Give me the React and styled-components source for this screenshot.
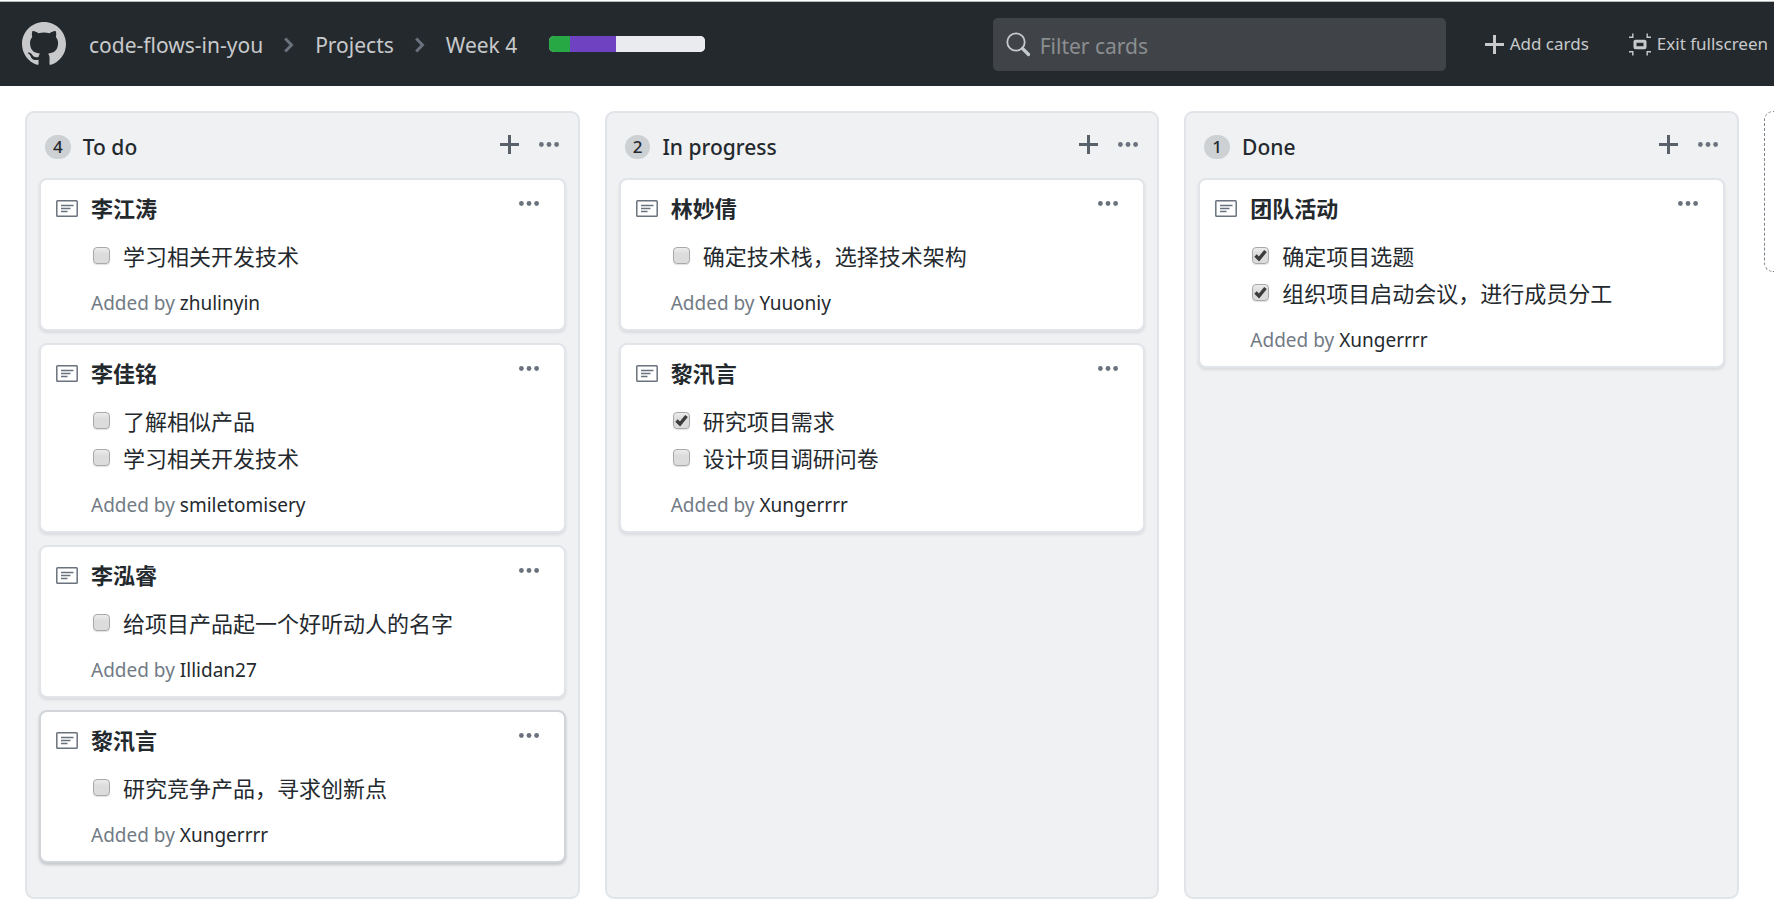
import React from "react";
import styled, { createGlobalStyle } from "styled-components";

const GlobalStyle = createGlobalStyle`
  *, *::before, *::after { box-sizing: border-box; }
  body {
    margin: 0;
    background: #ffffff;
    color: #24292e;
    font-family: "Noto Sans", "Noto Sans CJK SC", sans-serif;
    font-size: 21px;
  }
  button, input { font: inherit; }
`;

const Page = styled.div`
  display: flex;
  flex-direction: column;
  min-height: 100vh;
  overflow-x: hidden;
`;

const Header = styled.header`
  display: flex;
  align-items: center;
  height: 86px;
  padding: 2px 6px 0 22px;
  background: linear-gradient(#ffffff 1px, #b4bcbe 1px, #b4bcbe 2px, #24292e 2px);
  color: #c8c9cb;
`;

const LogoLink = styled.a`
  display: flex;
  margin-right: 23px;
  color: inherit;
`;

const Crumbs = styled.nav`
  display: flex;
  align-items: center;
  gap: 21px;
  padding-top: 2px;
`;

const Crumb = styled.a`
  color: inherit;
  text-decoration: none;
  white-space: nowrap;
  line-height: 32px;
`;

const Progress = styled.div`
  display: flex;
  width: 156px;
  height: 16px;
  margin-left: 32px;
  border-radius: 5px;
  overflow: hidden;
  background: #eaebef;
`;

const Segment = styled.span`
  flex: ${(p) => p.$share} 0 0;
  background: ${(p) => p.$color};
`;

const Filter = styled.label`
  display: flex;
  align-items: center;
  gap: 9px;
  width: 453px;
  height: 53px;
  margin-left: auto;
  padding: 0 12px 0 13px;
  border-radius: 5px;
  background: #404448;
`;

const FilterInput = styled.input`
  flex: 1;
  min-width: 0;
  padding: 4px 0 0;
  border: 0;
  outline: 0;
  background: transparent;
  color: #ffffff;
  &::placeholder { color: #8b8e90; opacity: 1; }
`;

const Actions = styled.div`
  display: flex;
  gap: 40px;
  margin-left: 39px;
`;

const HeaderButton = styled.button`
  display: flex;
  align-items: center;
  gap: 6px;
  padding: 0;
  border: 0;
  background: none;
  color: inherit;
  font-size: 17px;
  line-height: 32px;
  white-space: nowrap;
  cursor: pointer;
`;

const Board = styled.main`
  flex: 1;
  display: grid;
  grid-template-columns: repeat(3, minmax(0, 1fr)) 10px;
  gap: 25px;
  padding: 25px 0 16px 25px;
`;

const ColumnBox = styled.section`
  display: flex;
  flex-direction: column;
  padding: 0 12px 34px;
  border: 2px solid #e1e4e8;
  border-radius: 9px;
  background: #eff1f3;
`;

const ColumnHeader = styled.div`
  display: flex;
  align-items: center;
  height: 65px;
  padding: 3px 7px 0 6px;
`;

const Count = styled.span`
  min-width: 24px;
  height: 24px;
  padding: 0 8px;
  border-radius: 12px;
  background: #ced1d4;
  font-size: 17px;
  font-weight: 500;
  line-height: 24px;
  text-align: center;
`;

const ColumnTitle = styled.h2`
  flex: 1;
  margin: 0 0 0 12px;
  font-size: 21px;
  font-weight: 500;
  line-height: 32px;
`;

const IconButton = styled.button`
  display: flex;
  padding: 0;
  border: 0;
  background: none;
  color: ${(p) => p.$color || "#6a737d"};
  cursor: pointer;
`;

const ColumnActions = styled.div`
  display: flex;
  align-items: center;
  gap: 20px;
  padding-bottom: 6px;
`;

const Cards = styled.div`
  display: flex;
  flex-direction: column;
  gap: 12px;
`;

const CardBox = styled.article`
  display: flex;
  align-items: flex-start;
  padding: 10px 25px 10px 15px;
  border: 2px solid ${(p) => (p.$active ? "#d1d5da" : "#e1e4e8")};
  border-radius: 8px;
  background: #ffffff;
  box-shadow: 0 2px 3px rgba(27, 31, 35, ${(p) => (p.$active ? 0.2 : 0.1)});
  > svg { margin-top: 10px; color: #6a737d; }
  > button { margin-top: 11px; }
`;

const CardBody = styled.div`
  flex: 1;
  min-width: 0;
  margin-left: 13px;
`;

const CardTitle = styled.h3`
  margin: 0 0 11px;
  font-size: 22px;
  font-weight: 700;
  line-height: 37px;
`;

const Tasks = styled.ul`
  margin: 0;
  padding: 0 0 0 2px;
  list-style: none;
`;

const Task = styled.label`
  display: flex;
  align-items: center;
  gap: 13px;
  font-size: 22px;
  line-height: 37px;
`;

const TickFrame = styled.span`
  position: relative;
  display: flex;
  padding-bottom: 3px;
  svg { position: absolute; top: 0; left: 0; pointer-events: none; }
  input:not(:checked) + svg { display: none; }
`;

const TickBox = styled.input`
  appearance: none;
  width: 17px;
  height: 17px;
  margin: 0;
  border: 1px solid #a9a9a9;
  border-radius: 4px;
  background: linear-gradient(#ececec, #dcdcdc 40%, #dcdcdc);
  box-shadow: 0 1px 1px rgba(0, 0, 0, 0.12);
`;

const AddedBy = styled.p`
  margin: 12px 0 0;
  color: #727b85;
  font-size: 19px;
  line-height: 32px;
`;

const Author = styled.a`
  color: #24292e;
  text-decoration: none;
`;

const AddColumn = styled.button`
  height: 161px;
  padding: 0;
  border: 1px dashed #7d858d;
  border-right: 0;
  border-radius: 9px 0 0 9px;
  background: none;
`;

const GitHubMark = () => (
  <svg width="44" height="44" viewBox="0 0 16 16" fill="currentColor" aria-hidden="true">
    <path d="M8 0C3.58 0 0 3.58 0 8c0 3.54 2.29 6.53 5.47 7.59.4.07.55-.17.55-.38 0-.19-.01-.82-.01-1.49-2.01.37-2.53-.49-2.69-.94-.09-.23-.48-.94-.82-1.13-.28-.15-.68-.52-.01-.53.63-.01 1.08.58 1.23.82.72 1.21 1.87.87 2.33.66.07-.52.28-.87.51-1.07-1.78-.2-3.64-.89-3.64-3.95 0-.87.31-1.59.82-2.15-.08-.2-.36-1.02.08-2.12 0 0 .67-.21 2.2.82.64-.18 1.32-.27 2-.27.68 0 1.36.09 2 .27 1.53-1.04 2.2-.82 2.2-.82.44 1.1.16 1.92.08 2.12.51.56.82 1.27.82 2.15 0 3.07-1.87 3.75-3.65 3.95.29.25.54.73.54 1.48 0 1.07-.01 1.93-.01 2.2 0 .21.15.46.55.38A8.013 8.013 0 0016 8c0-4.42-3.58-8-8-8z" />
  </svg>
);

const Chevron = () => (
  <svg width="10" height="16" viewBox="0 0 10 16" fill="none" stroke="#6a737d" strokeWidth="3" aria-hidden="true">
    <path d="M1.2 1.5 7.5 8l-6.3 6.5" />
  </svg>
);

const SearchIcon = () => (
  <svg width="25" height="25" viewBox="0 0 25 25" fill="none" stroke="#c6cacd" aria-hidden="true">
    <circle cx="10" cy="10" r="8.7" strokeWidth="1.8" />
    <path d="m16.5 16.5 6 6" strokeWidth="3.2" strokeLinecap="round" />
  </svg>
);

const PlusIcon = () => (
  <svg width="19" height="19" viewBox="0 0 19 19" fill="currentColor" aria-hidden="true">
    <path d="M8 0h3v8h8v3h-8v8H8v-8H0V8h8z" />
  </svg>
);

const DotsIcon = () => (
  <svg width="20" height="5" viewBox="0 0 20 5" fill="currentColor" aria-hidden="true">
    <circle cx="2.4" cy="2.5" r="2.4" />
    <circle cx="10" cy="2.5" r="2.4" />
    <circle cx="17.6" cy="2.5" r="2.4" />
  </svg>
);

const ExitIcon = () => (
  <svg width="22" height="23" viewBox="0 0 22 23" fill="none" stroke="currentColor" aria-hidden="true">
    <path d="M0 4.3h3.8V.5M22 4.3h-3.8V.5M0 18.7h3.8v3.8M22 18.7h-3.8v3.8" strokeWidth="1.4" />
    <rect x="6" y="8.3" width="10" height="6.4" rx="0.5" strokeWidth="3" />
  </svg>
);

const NoteIcon = () => (
  <svg width="22" height="17" viewBox="0 0 22 17" fill="none" stroke="currentColor" strokeWidth="1.5" aria-hidden="true">
    <rect x="0.8" y="0.8" width="20.4" height="15.4" rx="0.8" />
    <path d="M5 5.5h12.5M5 8.5h9.5M5 11.5h6.5" />
  </svg>
);

const TickIcon = () => (
  <svg width="17" height="17" viewBox="0 0 17 17" fill="none" stroke="#3c3c3c" strokeWidth="3.4" aria-hidden="true">
    <path d="M3.5 8.5 7 12l6.5-8" />
  </svg>
);

const columns = [
  {
    title: "To do",
    cards: [
      { title: "李江涛", author: "zhulinyin", tasks: [["学习相关开发技术", false]] },
      { title: "李佳铭", author: "smiletomisery", tasks: [["了解相似产品", false], ["学习相关开发技术", false]] },
      { title: "李泓睿", author: "Illidan27", tasks: [["给项目产品起一个好听动人的名字", false]] },
      { title: "黎汛言", author: "Xungerrrr", active: true, tasks: [["研究竞争产品，寻求创新点", false]] },
    ],
  },
  {
    title: "In progress",
    cards: [
      { title: "林妙倩", author: "Yuuoniy", tasks: [["确定技术栈，选择技术架构", false]] },
      { title: "黎汛言", author: "Xungerrrr", tasks: [["研究项目需求", true], ["设计项目调研问卷", false]] },
    ],
  },
  {
    title: "Done",
    cards: [
      { title: "团队活动", author: "Xungerrrr", tasks: [["确定项目选题", true], ["组织项目启动会议，进行成员分工", true]] },
    ],
  },
];

function Card({ card }) {
  return (
    <CardBox $active={card.active}>
      <NoteIcon />
      <CardBody>
        <CardTitle>{card.title}</CardTitle>
        <Tasks>
          {card.tasks.map(([text, done]) => (
            <li key={text}>
              <Task>
                <TickFrame>
                  <TickBox type="checkbox" defaultChecked={done} />
                  <TickIcon />
                </TickFrame>
                {text}
              </Task>
            </li>
          ))}
        </Tasks>
        <AddedBy>
          Added by <Author href="#">{card.author}</Author>
        </AddedBy>
      </CardBody>
      <IconButton aria-label="Card menu"><DotsIcon /></IconButton>
    </CardBox>
  );
}

function Column({ column }) {
  return (
    <ColumnBox>
      <ColumnHeader>
        <Count>{column.cards.length}</Count>
        <ColumnTitle>{column.title}</ColumnTitle>
        <ColumnActions>
          <IconButton aria-label="Add a note" $color="#586069"><PlusIcon /></IconButton>
          <IconButton aria-label="Column menu"><DotsIcon /></IconButton>
        </ColumnActions>
      </ColumnHeader>
      <Cards>
        {column.cards.map((card) => (
          <Card key={card.title} card={card} />
        ))}
      </Cards>
    </ColumnBox>
  );
}

export default function App() {
  return (
    <Page>
      <GlobalStyle />
      <Header>
        <LogoLink href="#" aria-label="GitHub"><GitHubMark /></LogoLink>
        <Crumbs>
          <Crumb href="#">code-flows-in-you</Crumb>
          <Chevron />
          <Crumb href="#">Projects</Crumb>
          <Chevron />
          <Crumb href="#">Week 4</Crumb>
        </Crumbs>
        <Progress>
          <Segment $share={21} $color="#28a745" />
          <Segment $share={46} $color="#6f42c1" />
          <Segment $share={89} $color="#eaebef" />
        </Progress>
        <Filter>
          <SearchIcon />
          <FilterInput type="text" placeholder="Filter cards" aria-label="Filter cards" />
        </Filter>
        <Actions>
          <HeaderButton><PlusIcon />Add cards</HeaderButton>
          <HeaderButton><ExitIcon />Exit fullscreen</HeaderButton>
        </Actions>
      </Header>
      <Board>
        {columns.map((column) => (
          <Column key={column.title} column={column} />
        ))}
        <AddColumn aria-label="Add column" />
      </Board>
    </Page>
  );
}
